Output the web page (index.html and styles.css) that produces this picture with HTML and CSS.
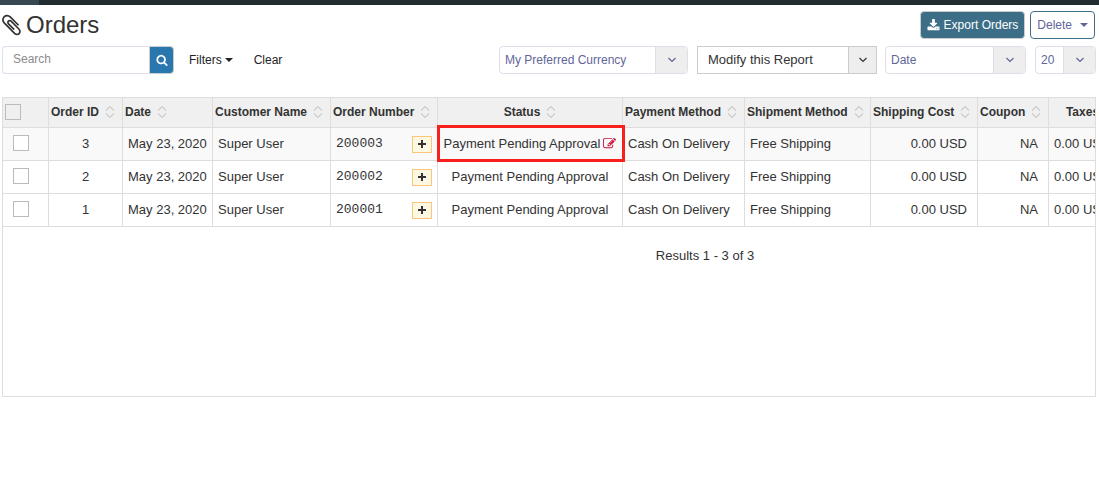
FILE: index.html
```html
<!DOCTYPE html>
<html lang="en">
<head>
<meta charset="utf-8">
<meta name="viewport" content="width=device-width, initial-scale=1">
<title>Orders</title>
<link rel="stylesheet" href="styles.css">
</head>
<body>
<svg class="sprite" aria-hidden="true">
  <symbol id="sort" viewBox="0 0 10 14"><path d="M1 5.500L5 1.500L9 5.500M1 8.500L5 12.500L9 8.500" fill="none" stroke="currentColor" stroke-width="1.200"/></symbol>
  <symbol id="chevron" viewBox="0 0 10 6"><path d="M1.500 1L5 4.500L8.500 1" fill="none" stroke="currentColor" stroke-width="1.200"/></symbol>
  <symbol id="plus" viewBox="0 0 8 8"><path d="M3 0h2v3h3v2H5v3H3V5H0V3h3z" fill="currentColor"/></symbol>
</svg>
<div class="topbar"><div class="topbar-brand"></div></div>
<header class="page-head">
  <h1 class="title">
    <svg class="title-icon" viewBox="0 0 1792 1792" aria-hidden="true"><path fill="currentColor" d="M1404 1385q0 117-79 196t-196 79q-135 0-235-100l-777-776q-113-115-113-271 0-159 110-270t269-111q158 0 273 113l605 606q10 10 10 22 0 16-30.500 46.500t-46.500 30.500q-13 0-23-10l-606-607q-79-77-181-77-106 0-179 75t-73 181q0 105 76 181l776 777q63 63 145 63 64 0 106-42t42-106q0-82-63-145l-581-581q-26-24-60-24-29 0-48 19t-19 48q0 32 25 59l410 410q10 10 10 22 0 16-31 47t-47 31q-12 0-22-10l-410-410q-63-61-63-149 0-82 57-139t139-57q88 0 149 63l581 581q100 98 100 235z"/></svg>
    Orders
  </h1>
  <button class="btn btn-primary" type="button">
    <svg class="btn-icon" viewBox="0 0 1792 1792" aria-hidden="true"><path fill="currentColor" d="M1344 1344q0-26-19-45t-45-19-45 19-19 45 19 45 45 19 45-19 19-45zm256 0q0-26-19-45t-45-19-45 19-19 45 19 45 45 19 45-19 19-45zm128-224v320q0 40-28 68t-68 28h-1472q-40 0-68-28t-28-68v-320q0-40 28-68t68-28h465l135 136q58 56 136 56t136-56l136-136h464q40 0 68 28t28 68zm-325-569q17 41-14 70l-448 448q-18 19-45 19t-45-19l-448-448q-31-29-14-70 17-39 59-39h256v-448q0-26 19-45t45-19h256q26 0 45 19t19 45v448h256q42 0 59 39z"/></svg>
    Export Orders
  </button>
  <button class="btn btn-outline" type="button">Delete <span class="caret"></span></button>
</header>
<div class="toolbar">
  <form class="search">
    <input class="search-input" type="search" placeholder="Search" aria-label="Search">
    <button class="search-btn" type="submit" aria-label="Search"><svg class="search-icon" viewBox="0 0 1792 1792" aria-hidden="true"><path fill="currentColor" d="M1216 832q0-185-131.500-316.500t-316.500-131.500-316.500 131.500-131.500 316.500 131.500 316.500 316.500 131.500 316.500-131.500 131.500-316.500zm512 832q0 52-38 90t-90 38q-54 0-90-38l-343-342q-179 124-399 124-143 0-273.500-55.500t-225-150-150-225-55.500-273.500 55.500-273.500 150-225 225-150 273.500-55.500 273.500 55.500 225 150 150 225 55.500 273.500q0 220-124 399l343 343q37 37 37 90z"/></svg></button>
  </form>
  <button class="link-btn" type="button">Filters <span class="caret"></span></button>
  <button class="link-btn" type="button">Clear</button>
  <div class="selects">
    <div class="select select-currency"><select aria-label="Currency"><option>My Preferred Currency</option></select><span class="arrow"><svg><use href="#chevron"/></svg></span></div>
    <div class="select select-report"><select aria-label="Report"><option>Modify this Report</option></select><span class="arrow"><svg><use href="#chevron"/></svg></span></div>
    <div class="select select-date"><select aria-label="Sort by"><option>Date</option></select><span class="arrow"><svg><use href="#chevron"/></svg></span></div>
    <div class="select select-count"><select aria-label="Results per page"><option>20</option></select><span class="arrow"><svg><use href="#chevron"/></svg></span></div>
  </div>
</div>
<main class="panel">
  <div class="sheet">
    <table class="orders">
      <colgroup><col class="c-check"><col class="c-id"><col class="c-date"><col class="c-name"><col class="c-number"><col class="c-status"><col class="c-pay"><col class="c-ship"><col class="c-cost"><col class="c-coupon"><col class="c-tax"><col></colgroup>
      <thead>
        <tr>
          <th class="check-head"><input class="tick" type="checkbox" aria-label="Select all orders"></th>
          <th>Order ID<svg class="sort"><use href="#sort"/></svg></th>
          <th>Date<svg class="sort"><use href="#sort"/></svg></th>
          <th>Customer Name<svg class="sort"><use href="#sort"/></svg></th>
          <th>Order Number<svg class="sort"><use href="#sort"/></svg></th>
          <th class="center">Status<svg class="sort"><use href="#sort"/></svg></th>
          <th>Payment Method<svg class="sort"><use href="#sort"/></svg></th>
          <th>Shipment Method<svg class="sort"><use href="#sort"/></svg></th>
          <th>Shipping Cost<svg class="sort"><use href="#sort"/></svg></th>
          <th>Coupon<svg class="sort"><use href="#sort"/></svg></th>
          <th class="center">Taxes<svg class="sort"><use href="#sort"/></svg></th>
          <th></th>
        </tr>
      </thead>
      <tbody>
        <tr class="hovered">
          <td><input class="tick" type="checkbox" aria-label="Select order 3"></td>
          <td class="center">3</td><td>May 23, 2020</td><td>Super User</td>
          <td><div class="number"><span>200003</span><button class="plus" type="button" aria-label="Expand order 200003"><svg><use href="#plus"/></svg></button></div></td>
          <td class="center marked">Payment Pending Approval<button class="edit" type="button" aria-label="Edit status"><svg viewBox="0 0 1792 1792"><path fill="currentColor" d="M888 1184l116-116-152-152-116 116v56h96v96h56zm440-720q-16-16-33 1l-350 350q-17 17-1 33t33-1l350-350q17-17 1-33zm80 594v190q0 119-84.500 203.500t-203.500 84.500h-832q-119 0-203.500-84.500t-84.500-203.500v-832q0-119 84.500-203.500t203.500-84.500h832q63 0 117 25 15 7 18 23 3 17-9 29l-49 49q-14 14-32 8-23-6-45-6h-832q-66 0-113 47t-47 113v832q0 66 47 113t113 47h832q66 0 113-47t47-113v-126q0-13 9-22l64-64q15-15 35-7t20 29zm-96-738l288 288-672 672h-288v-288zm444 132l-92 92-288-288 92-92q28-28 68-28t68 28l152 152q28 28 28 68t-28 68z"/></svg></button></td>
          <td>Cash On Delivery</td><td>Free Shipping</td><td class="right">0.00 USD</td><td class="right">NA</td><td>0.00 USD</td><td></td>
        </tr>
        <tr>
          <td><input class="tick" type="checkbox" aria-label="Select order 2"></td>
          <td class="center">2</td><td>May 23, 2020</td><td>Super User</td>
          <td><div class="number"><span>200002</span><button class="plus" type="button" aria-label="Expand order 200002"><svg><use href="#plus"/></svg></button></div></td>
          <td class="center">Payment Pending Approval</td>
          <td>Cash On Delivery</td><td>Free Shipping</td><td class="right">0.00 USD</td><td class="right">NA</td><td>0.00 USD</td><td></td>
        </tr>
        <tr>
          <td><input class="tick" type="checkbox" aria-label="Select order 1"></td>
          <td class="center">1</td><td>May 23, 2020</td><td>Super User</td>
          <td><div class="number"><span>200001</span><button class="plus" type="button" aria-label="Expand order 200001"><svg><use href="#plus"/></svg></button></div></td>
          <td class="center">Payment Pending Approval</td>
          <td>Cash On Delivery</td><td>Free Shipping</td><td class="right">0.00 USD</td><td class="right">NA</td><td>0.00 USD</td><td></td>
        </tr>
      </tbody>
    </table>
    <p class="results">Results 1 - 3 of 3</p>
  </div>
</main>
</body>
</html>
```
FILE: styles.css
```css
* { box-sizing: border-box; }
body {
  margin: 0;
  background: #fff;
  color: #333;
  font: 13px/18px "Liberation Sans", Arial, sans-serif;
}
button, input, select { font: inherit; color: inherit; margin: 0; }
button { cursor: pointer; }
.sprite { display: none; }

.topbar { height: 5px; background: #222d32; }
.topbar-brand { width: 39px; height: 5px; background: #374850; }

.page-head {
  display: flex;
  align-items: center;
  gap: 5px;
  padding: 6px 4px 0 2px;
}
.title {
  display: flex;
  align-items: center;
  gap: 0;
  margin: 0 auto 0 0;
  font-size: 24px;
  line-height: 28px;
  font-weight: 400;
}
.title-icon { width: 24px; height: 24px; }
.btn {
  display: flex;
  align-items: center;
  height: 28px;
  padding: 0 6px;
  border-radius: 4px;
  font-size: 12px;
  white-space: nowrap;
}
.btn-primary {
  gap: 4px;
  border: 1px solid #ccc;
  background: #3c6f87;
  color: #fff;
}
.btn-icon { width: 13px; height: 13px; }
.btn-outline { gap: 8px; border: 1px solid #3c6f87; background: #fff; color: #5f6698; }
.caret {
  border: 4px solid transparent;
  border-top-color: currentColor;
  border-bottom: 0;
}

.toolbar {
  display: flex;
  align-items: center;
  padding: 7px 3px 0 2px;
  font-size: 12px;
}
.search { display: flex; width: 172px; margin-right: 9px; }
.search-input {
  flex: 1;
  min-width: 0;
  height: 28px;
  padding: 0 10px 2px;
  border: 1px solid #dddfea;
  border-right: 0;
  border-radius: 4px 0 0 4px;
  background: #fff;
  appearance: none;
}
.search-input::placeholder { color: #8c8c8c; opacity: 1; }
.search-btn {
  display: grid;
  place-items: center;
  width: 25px;
  padding: 0;
  border: 1px solid #ccc;
  border-radius: 0 4px 4px 0;
  background: #2a77b0;
  color: #fff;
}
.search-icon { width: 12px; height: 12px; }
.link-btn {
  display: flex;
  align-items: center;
  gap: 3px;
  margin-right: 9px;
  padding: 0 6px;
  border: 0;
  background: none;
  color: #222;
}
.selects { display: flex; margin-left: auto; }
.select {
  display: flex;
  height: 28px;
  border: 1px solid #dddfea;
  border-radius: 4px;
  overflow: hidden;
  background: #fff;
  color: #5f6698;
}
.select select {
  flex: 1;
  min-width: 0;
  padding: 0 5px;
  border: 0;
  background: transparent;
  appearance: none;
}
.arrow {
  display: grid;
  place-items: center;
  width: 32px;
  border-left: 1px solid #dddfea;
  background: #eee;
  pointer-events: none;
}
.arrow svg { width: 10px; height: 6px; }
.select-currency { width: 189px; margin-right: 9px; }
.select-report {
  width: 180px;
  margin-right: 8px;
  border-color: #ccc;
  border-radius: 0;
  color: #333;
  font-size: 13px;
}
.select-report select { padding: 0 10px; }
.select-report .arrow { width: 28px; border-color: #ccc; }
.select-date { width: 141px; margin-right: 9px; }
.select-count { width: 61px; }

.panel {
  min-height: 300px;
  margin: 23px 3px 0 2px;
  border: 1px solid #ddd;
  border-top: 0;
  overflow: hidden;
}
.sheet { width: 1404px; }
.orders {
  width: 100%;
  table-layout: fixed;
  border-collapse: separate;
  border-spacing: 0;
}
.c-check { width: 46px; }
.c-id { width: 74px; }
.c-date { width: 90px; }
.c-name { width: 118px; }
.c-number { width: 107px; }
.c-status { width: 185px; }
.c-pay { width: 122px; }
.c-ship { width: 126px; }
.c-cost { width: 107px; }
.c-coupon { width: 71px; }
.c-tax { width: 84px; }
th, td {
  border-right: 1px solid #ddd;
  border-bottom: 1px solid #ddd;
  white-space: nowrap;
  text-align: left;
}
th {
  height: 31px;
  padding: 0 2px 2px;
  border-top: 1px solid #ddd;
  background: #f0f0f0;
  font-size: 12px;
}
td { height: 33px; padding: 0 5px; }
.hovered { background: #f9f9f9; }
.center { text-align: center; }
.right { text-align: right; padding-right: 10px; }
.sort { width: 10px; height: 14px; margin-left: 6px; vertical-align: middle; color: #ccc; }
.tick {
  display: block;
  width: 16px;
  height: 16px;
  border: 1px solid #bbb;
  background: #fff;
  appearance: none;
}
td .tick { margin: 0 0 2px 5px; }
.check-head .tick { background: transparent; }
.number {
  display: flex;
  align-items: center;
  justify-content: space-between;
  font-family: "Liberation Mono", monospace;
}
.plus {
  display: grid;
  place-items: center;
  width: 20px;
  height: 17px;
  padding: 0;
  border: 1px solid #fbc678;
  background: #fcf8e3;
}
.plus svg { width: 8px; height: 8px; }
.marked { position: relative; }
.marked::after {
  content: "";
  position: absolute;
  inset: -3px -3px -2px -1px;
  border: 3px solid #f8201c;
  pointer-events: none;
}
.edit {
  padding: 0;
  margin: 0 0 2px 3px;
  border: 0;
  background: none;
  color: #c8103c;
  vertical-align: middle;
}
.edit svg { display: block; width: 13px; height: 13px; }
.results { margin: 20px 0; text-align: center; }
```
